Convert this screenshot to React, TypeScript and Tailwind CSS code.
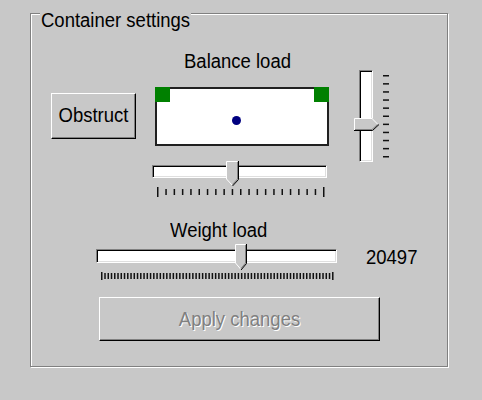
import React from "react";

const BG = "#c8c8c8";

function T({ children }: { children: React.ReactNode }) {
  return <span className="inline-block whitespace-nowrap leading-[20px] scale-y-[1.12]">{children}</span>;
}

function HThumb({ w, h, body }: { w: number; h: number; body: number }) {
  const m = w / 2;
  return (
    <svg width={w} height={h} className="block">
      <polygon points={`0,0 ${w},0 ${w},${body} ${m},${h} 0,${body}`} fill={BG} />
      <polyline points={`0.5,${body} 0.5,0.5 ${w - 1.5},0.5`} fill="none" stroke="#fff" />
      <line x1={0.5} y1={body} x2={m} y2={h - 0.5} stroke="#fff" />
      <polyline points={`${w - 1.5},1 ${w - 1.5},${body} ${m},${h - 1.5}`} fill="none" stroke="#808080" />
      <polyline points={`${w - 0.5},0 ${w - 0.5},${body + 0.5} ${m},${h}`} fill="none" stroke="#000" />
    </svg>
  );
}

function VThumb({ w, h, body }: { w: number; h: number; body: number }) {
  const m = h / 2;
  return (
    <svg width={w} height={h} className="block">
      <polygon points={`0,0 ${body},0 ${w},${m} ${body},${h} 0,${h}`} fill={BG} />
      <polyline points={`0.5,${h - 1} 0.5,0.5 ${body},0.5 ${w - 1},${m}`} fill="none" stroke="#fff" />
      <polyline points={`1,${h - 1.5} ${body},${h - 1.5} ${w - 1.5},${m}`} fill="none" stroke="#808080" />
      <polyline points={`0,${h - 0.5} ${body + 0.5},${h - 0.5} ${w},${m}`} fill="none" stroke="#000" />
    </svg>
  );
}

const track =
  "bg-white border border-t-[#808080] border-l-[#808080] border-b-white border-r-white shadow-[inset_1px_1px_0_#000,inset_-1px_-1px_0_#dfdfdf]";

const raised =
  "bg-[#c8c8c8] border border-t-white border-l-white border-r-black border-b-black shadow-[inset_-1px_-1px_0_#808080]";

export default function App() {
  const balTicks = Array.from({ length: 21 }, (_, i) => 5 + i * 8.3);
  const vTicks = Array.from({ length: 11 }, (_, i) => 5 + i * 8.1);
  const wTicks = Array.from({ length: 72 }, (_, i) => 5 + i * 3.254);

  return (
    <div className="w-[482px] h-[400px] bg-[#c8c8c8] pl-[30px] pt-[13px] font-['Liberation_Sans',Arial,sans-serif] text-[18.5px] text-black">
      <div className="relative w-[418px] h-[354px] border border-[#808080] shadow-[inset_1px_1px_0_#fff,1px_1px_0_#fff]">
        <div className="absolute left-[9px] top-[-8px] h-[20px] px-[1px] bg-[#c8c8c8]">
          <T>Container settings</T>
        </div>

        <div className="flex items-start">
          <button className={`ml-[20px] mt-[79px] w-[85px] h-[46px] flex items-center justify-center pb-[2px] ${raised}`}>
            <T>Obstruct</T>
          </button>

          <div className="ml-[16px] w-[177px] flex flex-col">
            <div className="mt-[33px] pl-[32px] h-[20px]">
              <T>Balance load</T>
            </div>
            <div className="relative mt-[20px] ml-[3px] w-[174px] h-[59px] bg-white border-2 border-[#202020]">
              <div className="absolute -left-[2px] -top-[2px] w-[15px] h-[15px] bg-[#008000]" />
              <div className="absolute -right-[2px] -top-[2px] w-[15px] h-[15px] bg-[#008000]" />
              <div className="absolute left-[75px] top-[27px] w-[9px] h-[9px] rounded-full bg-[#000080]" />
            </div>
            <div className="relative mt-[15px] w-[175px] h-[25px]">
              <div className={`mt-[4px] h-[13px] ${track}`} />
              <div className="absolute left-[74px] top-0">
                <HThumb w={13} h={25} body={18} />
              </div>
            </div>
            <svg className="block mt-[1px]" width={175} height={10}>
              {balTicks.map((x, i) => {
                const end = i === 0 || i === balTicks.length - 1;
                return <rect key={i} x={x} y={end ? 0 : 2} width={1.5} height={end ? 10 : 6} fill="#111" />;
              })}
            </svg>
          </div>

          <div className="ml-[25px] mt-[56px] flex items-start">
            <div className="relative w-[25px] h-[92px]">
              <div className={`ml-[5px] w-[14px] h-full ${track}`} />
              <div className="absolute left-0 top-[48px]">
                <VThumb w={25} h={13} body={18} />
              </div>
            </div>
            <svg className="block ml-[4px]" width={6} height={92}>
              {vTicks.map((y, i) => (
                <rect key={i} x={0} y={y} width={6} height={1.5} fill="#111" />
              ))}
            </svg>
          </div>
        </div>

        <div className="mt-[19px] ml-[139px] h-[20px]">
          <T>Weight load</T>
        </div>
        <div className="mt-[8px] flex items-start">
          <div className="relative ml-[65px] w-[241px] h-[26px]">
            <div className={`mt-[5px] h-[14px] ${track}`} />
            <div className="absolute left-[139px] top-0">
              <HThumb w={12} h={26} body={19} />
            </div>
          </div>
          <div className="ml-[29px] -mt-[1px] h-[20px]">
            <T>20497</T>
          </div>
        </div>
        <svg className="block ml-[65px] mt-[2px]" width={241} height={8}>
          {wTicks.map((x, i) => {
            const end = i === 0 || i === wTicks.length - 1;
            return <rect key={i} x={x} y={end ? 0 : 1} width={1.5} height={end ? 8 : 6} fill="#111" />;
          })}
        </svg>
        <button
          disabled
          className={`ml-[68px] mt-[17px] w-[281px] h-[44px] flex items-center justify-center text-[#808080] [text-shadow:1px_1px_0_#fff] ${raised}`}
        >
          <T>Apply changes</T>
        </button>
      </div>
    </div>
  );
}
